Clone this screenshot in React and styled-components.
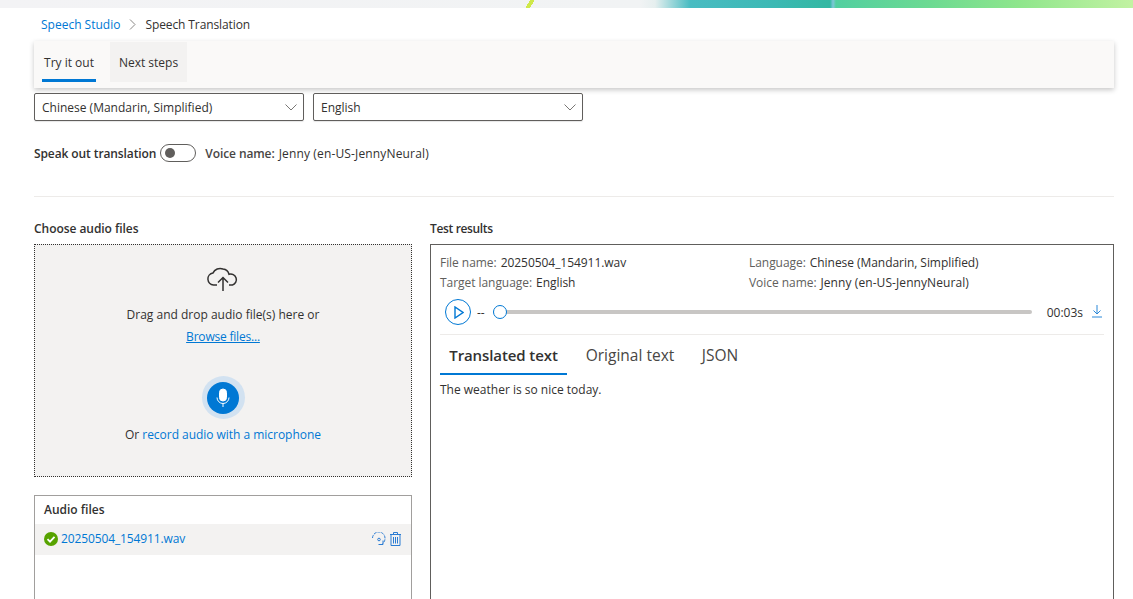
import React from 'react';
import styled, { createGlobalStyle } from 'styled-components';

const GlobalStyle = createGlobalStyle`
    html, body {
        margin: 0;
        padding: 0;
        background: #fff;
    }
    body {
        font-family: "Open Sans", "Noto Sans", "Liberation Sans", sans-serif;
        font-size: 12px;
        color: #323130;
    }
    * {
        box-sizing: border-box;
    }
`;

const Page = styled.div`
    width: 1133px;
    height: 599px;
    overflow: hidden;
`;

const TopBanner = styled.div`
    height: 8px;
    background:
        linear-gradient(120deg, transparent 0, transparent 459px, #cfe84a 459px, #cfe84a 463px, transparent 463px),
        linear-gradient(90deg, #f3f3f5 0, #f1f3f4 640px, #e6efef 655px, #49bcc2 690px, #3cb9b5 770px, #33b8a2 830px, #7fc6d8 833px, #52cfa0 836px, #6cda92 930px, #8fe68c 1020px, #c2f2a2 1133px);
`;

const Content = styled.div`
    padding: 0 19px 0 34px;
`;

const Breadcrumb = styled.nav`
    display: flex;
    align-items: center;
    height: 33px;
    padding-left: 7px;
    font-size: 12px;
`;

const CrumbLink = styled.a`
    color: #0078d4;
`;

const CrumbCurrent = styled.span`
    letter-spacing: -0.1px;
`;

const CrumbSep = styled.svg`
    width: 9px;
    height: 11px;
    margin: 0 8px;
    fill: none;
    stroke: #8a8886;
    stroke-width: 1;
`;

const TabBar = styled.div`
    display: flex;
    height: 47px;
    background: #faf9f8;
    box-shadow: 0 2px 5px rgba(0, 0, 0, 0.22);
    padding-top: 1px;
`;

const PageTab = styled.div`
    height: 40px;
    display: flex;
    align-items: center;
    padding: ${(p) => (p.$active ? '3px 0 0' : '0 10px')};
    margin: ${(p) => (p.$active ? '0 14px 0 8px' : '0')};
    background: ${(p) => (p.$active ? 'transparent' : '#f3f2f1')};
    border-bottom: ${(p) => (p.$active ? '3px solid #0078d4' : 'none')};
    width: ${(p) => (p.$active ? '54px' : '77px')};
    justify-content: center;
    white-space: nowrap;
`;

const SelectRow = styled.div`
    display: flex;
    gap: 9px;
    margin-top: 5px;
`;

const Select = styled.div`
    display: flex;
    align-items: center;
    justify-content: space-between;
    width: 270px;
    height: 28px;
    padding: 0 6px 0 7px;
    background: #fff;
    border: 1px solid #605e5c;
    border-radius: 2px;
    box-shadow: 0 1px 1px rgba(0, 0, 0, 0.1);
`;

const Chevron = styled.svg`
    width: 12px;
    height: 7px;
    fill: none;
    stroke: #797775;
    stroke-width: 1;
`;

const VoiceRow = styled.div`
    display: flex;
    align-items: center;
    height: 18px;
    margin-top: 23px;
`;

const Strong = styled.span`
    font-weight: 600;
    color: #323130;
    letter-spacing: -0.1px;
`;

const Toggle = styled.span`
    display: flex;
    align-items: center;
    width: 36px;
    height: 18px;
    margin: 0 9px 0 4px;
    padding-left: 4px;
    border: 1px solid #605e5c;
    border-radius: 9px;
    background: #fff;
`;

const Knob = styled.span`
    width: 10px;
    height: 10px;
    border-radius: 50%;
    background: #605e5c;
`;

const VoiceLabel = styled.span`
    color: #484644;
    font-weight: 600;
    letter-spacing: -0.1px;
    margin-right: 4px;
`;

const VoiceValue = styled.span`
    letter-spacing: 0.15px;
`;

const Divider = styled.hr`
    border: none;
    height: 1px;
    margin: ${(p) => p.$margin || '34px 0 0'};
    background: #edebe9;
`;

const Columns = styled.div`
    display: grid;
    grid-template-columns: 378px 684px;
    column-gap: 18px;
    margin-top: 23px;
`;

const Column = styled.section`
    display: flex;
    flex-direction: column;
`;

const SectionTitle = styled.h2`
    margin: 0;
    height: 24px;
    line-height: 17px;
    font-size: 12px;
    font-weight: 600;
    color: #323130;
    letter-spacing: ${(p) => p.$spacing || 0}px;
`;

const DropZone = styled.div`
    height: 233px;
    display: flex;
    flex-direction: column;
    align-items: center;
    padding-top: 22px;
    background: #f3f2f1;
    border: 1px dotted #323130;
`;

const DropText = styled.div`
    margin-top: 14px;
    line-height: 17px;
    white-space: nowrap;
`;

const BrowseLink = styled.a`
    margin-top: 5px;
    line-height: 17px;
    color: #0078d4;
    text-decoration: underline;
    letter-spacing: -0.2px;
`;

const MicHalo = styled.div`
    display: flex;
    align-items: center;
    justify-content: center;
    width: 43px;
    height: 43px;
    margin-top: 31px;
    border-radius: 50%;
    background: #d2e2f1;
`;

const MicButton = styled.div`
    display: flex;
    align-items: center;
    justify-content: center;
    width: 32px;
    height: 32px;
    border-radius: 50%;
    background: #0078d4;
`;

const RecordText = styled.div`
    margin-top: 7px;
    line-height: 17px;
    white-space: nowrap;
    letter-spacing: -0.03px;
`;

const Blue = styled.span`
    color: #0078d4;
`;

const FilesBox = styled.div`
    height: 130px;
    margin-top: 18px;
    border: 1px solid #a19f9d;
    border-bottom: none;
`;

const FilesTitle = styled.div`
    height: 28px;
    padding: 5px 0 0 9px;
    line-height: 17px;
    font-weight: 600;
`;

const FileRow = styled.div`
    display: flex;
    align-items: center;
    height: 31px;
    padding: 0 10px 2px 9px;
    background: #f3f2f1;
`;

const FileName = styled.span`
    flex: 1;
    margin-left: 3px;
    color: #0078d4;
    letter-spacing: -0.12px;
`;

const FileIcon = styled.svg`
    width: ${(p) => p.$w}px;
    height: 14px;
    margin-left: ${(p) => p.$gap || 0}px;
    fill: none;
    stroke: #2b7cd3;
    stroke-width: 1;
`;

const ResultBox = styled.div`
    height: 400px;
    padding: 9px 9px 0;
    border: 1px solid #605e5c;
    border-bottom: none;
`;

const MetaGrid = styled.div`
    display: grid;
    grid-template-columns: 309px 1fr;
    row-gap: 3px;
    line-height: 17px;
    letter-spacing: -0.05px;
`;

const MetaLabel = styled.span`
    color: #605e5c;
    margin-right: 4px;
`;

const MetaVoice = styled.span`
    letter-spacing: 0.08px;
`;

const Player = styled.div`
    display: flex;
    align-items: center;
    height: 26px;
    margin-top: 8px;
    padding: 0 2px 0 5px;
`;

const PlayButton = styled.div`
    display: flex;
    align-items: center;
    justify-content: center;
    width: 26px;
    height: 26px;
    padding-left: 2px;
    border: 1.5px solid #0078d4;
    border-radius: 50%;
`;

const Dashes = styled.span`
    margin: 0 8px 0 6px;
`;

const Track = styled.div`
    flex: 1;
    position: relative;
    height: 4px;
    border-radius: 2px;
    background: #c8c6c4;
`;

const Thumb = styled.span`
    position: absolute;
    left: 0;
    top: -5px;
    width: 14px;
    height: 14px;
    border-radius: 50%;
    background: #fff;
    border: 1.5px solid #0078d4;
`;

const Duration = styled.span`
    margin: 0 9px 0 15px;
`;

const DownloadIcon = styled.svg`
    width: 10px;
    height: 13px;
    margin-bottom: 2px;
    fill: none;
    stroke: #2b88d8;
`;

const ResultTabs = styled.div`
    display: flex;
    height: 40px;
`;

const ResultTab = styled.div`
    display: flex;
    align-items: center;
    justify-content: center;
    width: ${(p) => p.$w}px;
    margin-right: ${(p) => p.$gap || 0}px;
    padding-top: 2px;
    font-size: ${(p) => (p.$active ? 15 : 15.5)}px;
    letter-spacing: ${(p) => (p.$active ? -0.1 : 0)}px;
    color: ${(p) => (p.$active ? '#323130' : '#484644')};
    font-weight: ${(p) => (p.$active ? 600 : 400)};
    border-bottom: ${(p) => (p.$active ? '2px solid #0078d4' : '2px solid transparent')};
`;

const Output = styled.p`
    margin: 6px 0 0;
    line-height: 17px;
`;

function App() {
    return (
        <Page>
            <GlobalStyle />
            <TopBanner />
            <Content>
                <Breadcrumb>
                    <CrumbLink>Speech Studio</CrumbLink>
                    <CrumbSep viewBox="0 0 9 11"><path d="M2 .5 7 5.5 2 10.5" /></CrumbSep>
                    <CrumbCurrent>Speech Translation</CrumbCurrent>
                </Breadcrumb>
                <TabBar>
                    <PageTab $active>Try it out</PageTab>
                    <PageTab>Next steps</PageTab>
                </TabBar>
                <SelectRow>
                    <Select>
                        Chinese (Mandarin, Simplified)
                        <Chevron viewBox="0 0 12 7"><path d="M.5.5 6 6 11.500.5" /></Chevron>
                    </Select>
                    <Select>
                        English
                        <Chevron viewBox="0 0 12 7"><path d="M.5.5 6 6 11.500.5" /></Chevron>
                    </Select>
                </SelectRow>
                <VoiceRow>
                    <Strong>Speak out translation</Strong>
                    <Toggle><Knob /></Toggle>
                    <VoiceLabel>Voice name:</VoiceLabel>
                    <VoiceValue>Jenny (en-US-JennyNeural)</VoiceValue>
                </VoiceRow>
                <Divider />
                <Columns>
                    <Column>
                        <SectionTitle $spacing={-0.05}>Choose audio files</SectionTitle>
                        <DropZone>
                            <svg width="34" height="25" viewBox="0 0 34 25" fill="none" stroke="#323130" strokeWidth="1.5">
                                <path d="M11 18H7.500a6 6 0 0 1-.6-11.900A8 8 0 0 1 17 2a7 7 0 0 1 6 5.300 5.400 5.400 0 0 1 3.500 10.700H23" />
                                <path d="M17 24V11M12 15.500l5-5 5 5" />
                            </svg>
                            <DropText>Drag and drop audio file(s) here or</DropText>
                            <BrowseLink>Browse files...</BrowseLink>
                            <MicHalo>
                                <MicButton>
                                    <svg width="14" height="20" viewBox="0 0 14 20" fill="none" stroke="#fff">
                                        <rect x="3.500" y="1" width="7" height="12" rx="3.500" fill="#fff" />
                                        <path d="M1 9.500a6 6 0 0 0 12 0M7 15.500V19" />
                                    </svg>
                                </MicButton>
                            </MicHalo>
                            <RecordText>Or <Blue>record audio with a microphone</Blue></RecordText>
                        </DropZone>
                        <FilesBox>
                            <FilesTitle>Audio files</FilesTitle>
                            <FileRow>
                                <svg width="14" height="14" viewBox="0 0 14 14">
                                    <circle cx="7" cy="7" r="7" fill="#57a300" />
                                    <path d="M3.500 7.200 6 9.600 10.500 4.800" fill="none" stroke="#fff" strokeWidth="1.800" />
                                </svg>
                                <FileName>20250504_154911.wav</FileName>
                                <FileIcon $w={14} viewBox="0 0 14 14">
                                    <path d="M.5 6A6.200 6.200 0 0 1 13 6.500a6 6 0 0 1-2.500 5" strokeDasharray="3 1" />
                                    <path d="M6.500 12.500h4.500V8.500" />
                                    <circle cx="7" cy="7.500" r="1.300" />
                                </FileIcon>
                                <FileIcon $w={11} $gap={4} viewBox="0 0 11 14">
                                    <path d="M0 2.500h11M3.500 2.500V.5h4v2M1 2.500v11h9v-11M3.500 5v6.500M5.500 5v6.500M7.500 5v6.500" />
                                </FileIcon>
                            </FileRow>
                        </FilesBox>
                    </Column>
                    <Column>
                        <SectionTitle $spacing={-0.35}>Test results</SectionTitle>
                        <ResultBox>
                            <MetaGrid>
                                <div><MetaLabel>File name:</MetaLabel>20250504_154911.wav</div>
                                <div><MetaLabel>Language:</MetaLabel>Chinese (Mandarin, Simplified)</div>
                                <div><MetaLabel>Target language:</MetaLabel>English</div>
                                <div><MetaLabel>Voice name:</MetaLabel><MetaVoice>Jenny (en-US-JennyNeural)</MetaVoice></div>
                            </MetaGrid>
                            <Player>
                                <PlayButton>
                                    <svg width="10" height="13" viewBox="0 0 10 13" fill="none" stroke="#0078d4" strokeWidth="1.400">
                                        <path d="M1 1v11l8-5.500z" />
                                    </svg>
                                </PlayButton>
                                <Dashes>--</Dashes>
                                <Track><Thumb /></Track>
                                <Duration>00:03s</Duration>
                                <DownloadIcon viewBox="0 0 10 13">
                                    <path d="M5 0v9M1.500 5.500 5 9l3.500-3.500M0 12h10" />
                                </DownloadIcon>
                            </Player>
                            <Divider $margin="9px 0 0" />
                            <ResultTabs>
                                <ResultTab $active $w={127} $gap={13}>Translated text</ResultTab>
                                <ResultTab $w={100} $gap={15}>Original text</ResultTab>
                                <ResultTab $w={50}>JSON</ResultTab>
                            </ResultTabs>
                            <Output>The weather is so nice today.</Output>
                        </ResultBox>
                    </Column>
                </Columns>
            </Content>
        </Page>
    );
}

export default App;
